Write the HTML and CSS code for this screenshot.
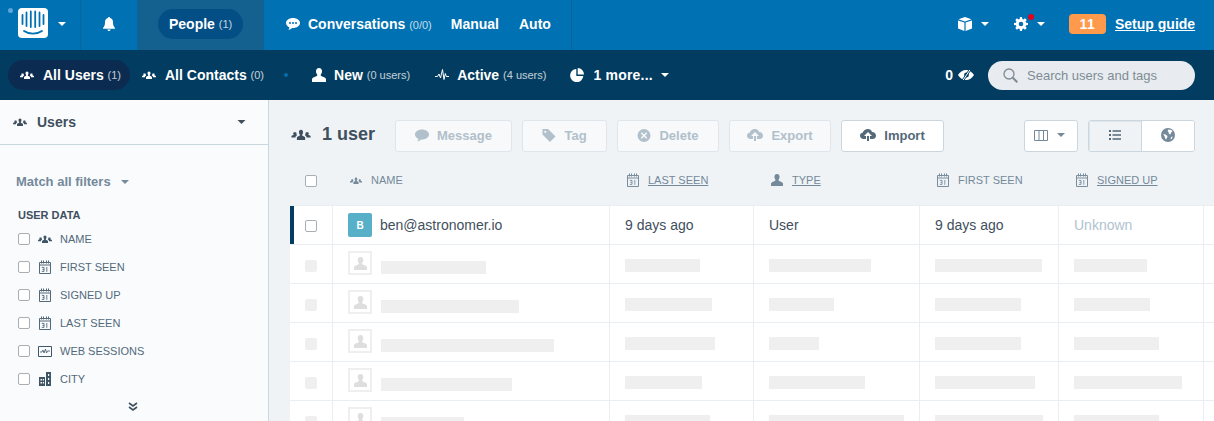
FILE: index.html
```html
<!DOCTYPE html>
<html lang="en">
<head>
<meta charset="utf-8">
<title>People</title>
<link rel="stylesheet" href="styles.css">
</head>
<body>
<svg class="defs" width="0" height="0" aria-hidden="true">
  <symbol id="i-users" viewBox="0 0 14 8"><path d="M7 .5c1 0 1.500.8 1.500 1.800 0 .8-.3 1.400-.7 1.800 0 .6.300.8 1.100 1.100.8.300 1.100.6 1.100 1.200V8H4V6.400c0-.6.300-.9 1.100-1.200.8-.3 1.100-.5 1.100-1.100-.4-.4-.7-1-.7-1.800C5.500 1.300 6 .5 7 .5zM2.700 2.400c.4 0 .7.100 1 .3-.1.900.1 1.400.5 1.800-.5.300-1.200.6-1.300 1.700H0v-.7c0-.4.300-.7.900-.9.500-.2.800-.3.800-.6-.3-.3-.4-.7-.4-1 0-.4.500-.6 1.400-.6zm8.600 0c.9 0 1.400.2 1.400.6 0 .3-.1.700-.4 1 0 .3.300.4.800.6.600.2.900.5.900.9v.7h-2.900c-.1-1.100-.8-1.400-1.300-1.700.4-.4.600-.9.500-1.800.3-.2.600-.3 1-.3z"/></symbol>
  <symbol id="i-user" viewBox="0 0 14 14"><path d="M7 0c2 0 3 1.400 3 3.300 0 1.500-.6 2.700-1.300 3.400 0 1 .5 1.400 2.200 2 1.700.6 3.100 1.300 3.100 2.600V14H0v-2.700c0-1.300 1.400-2 3.100-2.600 1.700-.6 2.200-1 2.200-2C4.600 6 4 4.800 4 3.300 4 1.400 5 0 7 0z"/></symbol>
  <symbol id="i-cal" viewBox="0 0 12 14"><path fill="none" stroke="currentColor" d="M.5 2.500h11v11H.5zM.5 5h11"/><path fill="currentColor" d="M2 .5h1v3H2zM4 .5h1v3H4zM7 .5h1v3H7zM9 .5h1v3H9z"/><path fill="none" stroke="currentColor" stroke-width=".9" d="M2.800 7.400h2.200v4H2.800M3.500 9.400h1.500M7.800 7v4.800"/></symbol>
  <symbol id="i-caret" viewBox="0 0 8 4"><path d="M0 0h8L4 4z"/></symbol>
</svg>

<header class="topbar">
  <div class="cell cell-logo">
    <span class="status-dot"></span>
    <svg class="logo" viewBox="0 0 30 30"><rect width="30" height="30" rx="4" fill="#fff"/><path d="M4.500 7v9M8.500 4.500v13.500M12.800 3.500v15.500M17.200 3.500v15.500M21.500 4.500v13.500M25.500 7v9" stroke="#0071b2" stroke-width="1.800" stroke-linecap="round"/><path d="M6 23c5 3.500 13 3.500 18 0" fill="none" stroke="#0071b2" stroke-width="1.800" stroke-linecap="round"/></svg>
    <svg class="caret caret-w"><use href="#i-caret"/></svg>
  </div>
  <div class="cell cell-bell">
    <svg class="ic-bell" viewBox="0 0 12 14"><path fill="#fff" d="M6 0c.6 0 1 .4 1 1 2 .5 3 2 3 4 0 3 .5 4.500 2 6v.8H0V11c1.500-1.500 2-3 2-6 0-2 1-3.500 3-4 0-.6.400-1 1-1zM4.300 12.500h3.400C7.600 13.400 6.900 14 6 14s-1.600-.6-1.700-1.500z"/></svg>
  </div>
  <div class="cell cell-people">
    <a class="pill pill-people">People <small>(1)</small></a>
  </div>
  <nav class="cell cell-conv">
    <svg class="ic-chat" viewBox="0 0 14 12"><path fill="#fff" d="M7 0c3.900 0 7 2.200 7 5s-3.100 5-7 5h-.9C5 11 3.700 11.800 2.300 12c.6-.7 1-1.500 1.100-2.600C1.400 8.500 0 6.900 0 5c0-2.800 3.100-5 7-5z"/><circle cx="4" cy="5" r="1" fill="#0071b2"/><circle cx="7" cy="5" r="1" fill="#0071b2"/><circle cx="10" cy="5" r="1" fill="#0071b2"/></svg>
    <a class="tnav tnav-conv">Conversations <small>(0/0)</small></a>
    <a class="tnav tnav-manual">Manual</a>
    <a class="tnav">Auto</a>
  </nav>
  <div class="top-right">
    <svg class="ic-cube" viewBox="0 0 14 14"><path fill="#fff" d="M7 0l6.500 2.300L7 4.500.5 2.300zM0 3.400l6.400 2.200V14L0 11.500zM14 3.400v8.100L7.600 14V5.600z"/></svg>
    <svg class="caret caret-w caret-cube"><use href="#i-caret"/></svg>
    <span class="gear-wrap">
      <svg class="ic-gear" viewBox="0 0 14 14"><path fill="#fff" fill-rule="evenodd" d="M6 0h2l.3 1.900 1.200.5L11 1.300l1.700 1.700-1.100 1.500.5 1.200 1.900.3v2l-1.900.3-.5 1.200 1.100 1.500-1.700 1.700-1.500-1.100-1.200.5L8 14H6l-.3-1.900-1.200-.5L3 12.700 1.300 11l1.100-1.500-.5-1.200L0 8V6l1.900-.3.500-1.200L1.300 3 3 1.300l1.500 1.100 1.200-.5zM7 4.700a2.300 2.300 0 100 4.600 2.300 2.300 0 000-4.600z"/></svg>
      <span class="red-dot"></span>
    </span>
    <svg class="caret caret-w caret-gear"><use href="#i-caret"/></svg>
    <span class="badge">11</span>
    <a class="setup">Setup guide</a>
  </div>
</header>

<div class="subbar">
  <a class="pill pill-sub"><svg class="ic-users-w"><use href="#i-users"/></svg>All Users <small>(1)</small></a>
  <a class="snav snav-contacts"><svg class="ic-users-w"><use href="#i-users"/></svg>All Contacts <small>(0)</small></a>
  <span class="sub-dot"></span>
  <a class="snav snav-new"><svg class="ic-user-w"><use href="#i-user"/></svg>New <small>(0 users)</small></a>
  <a class="snav snav-active"><svg class="ic-pulse" viewBox="0 0 14 12"><path fill="none" stroke="#fff" d="M0 7.500h2.500L4 5l1.500 4L7.500.5l1.500 10 1.300-6 1 3H14"/></svg>Active <small>(4 users)</small></a>
  <a class="snav snav-more"><svg class="ic-pie" viewBox="0 0 14 14"><path fill="#fff" d="M6.300 1v7h7A6.600 6.600 0 116.300 1zM7.700 0A6.400 6.400 0 0114 6.600H7.700z"/></svg><span class="more-label">1 more...</span><svg class="caret caret-w caret-more"><use href="#i-caret"/></svg></a>
  <div class="sub-right">
    <span class="hidden-count">0</span>
    <svg class="ic-eye" viewBox="0 0 16 10"><path fill="#fff" d="M8 0c3.300 0 6.200 2 8 5-1.800 3-4.700 5-8 5S1.800 8 0 5c1.800-3 4.700-5 8-5z"/><circle cx="8.500" cy="5" r="2.400" fill="#023c60"/><path stroke="#023c60" stroke-width="2.400" d="M12.500-1L4.500 11"/><path stroke="#fff" stroke-width="1" d="M12.500-1L4.500 11"/></svg>
    <label class="search">
      <svg class="ic-search" viewBox="0 0 15 15"><circle cx="6" cy="6" r="5" fill="none" stroke="#7f8b94" stroke-width="1.300"/><path stroke="#7f8b94" stroke-width="2" d="M9.800 9.800l4.500 4.500"/></svg>
      <span>Search users and tags</span>
    </label>
  </div>
</div>

<div class="body-row">
  <aside class="sidebar">
    <div class="side-head">
      <svg class="ic-users-d"><use href="#i-users"/></svg>
      <span class="side-title">Users</span>
      <svg class="caret caret-d"><use href="#i-caret"/></svg>
    </div>
    <div class="match">Match all filters<svg class="caret caret-m"><use href="#i-caret"/></svg></div>
    <div class="side-label">USER DATA</div>
    <ul class="attrs">
      <li><span class="cb"></span><span class="attr-ic"><svg class="ic-users-s"><use href="#i-users"/></svg></span>NAME</li>
      <li><span class="cb"></span><span class="attr-ic"><svg class="ic-cal"><use href="#i-cal"/></svg></span>FIRST SEEN</li>
      <li><span class="cb"></span><span class="attr-ic"><svg class="ic-cal"><use href="#i-cal"/></svg></span>SIGNED UP</li>
      <li><span class="cb"></span><span class="attr-ic"><svg class="ic-cal"><use href="#i-cal"/></svg></span>LAST SEEN</li>
      <li><span class="cb"></span><span class="attr-ic"><svg class="ic-web" viewBox="0 0 14 11"><path fill="none" stroke="currentColor" d="M.5.500h13v10H.5z"/><path fill="none" stroke="currentColor" stroke-width=".8" d="M2 6h2l1-2 1 3 1.500-4 1 4 1-2H12"/></svg></span>WEB SESSIONS</li>
      <li><span class="cb"></span><span class="attr-ic"><svg class="ic-city" viewBox="0 0 12 14"><path fill="currentColor" fill-rule="evenodd" d="M0 5h6v9H0zM7 0h5v14H7zM1.500 7v1.500H3V7zM3.800 7v1.500h1.200V7zM1.500 10v1.500H3V10zM3.800 10v1.500h1.200V10zM9 2v2h1.200V2zM9 6v2h1.200V6zM9 10v2h1.200v-2z"/></svg></span>CITY</li>
    </ul>
    <div class="more-attrs"><svg class="ic-chev" viewBox="0 0 10 9"><path fill="none" stroke="#3f4f5d" stroke-width="1.600" d="M1 1l4 3 4-3M1 5l4 3 4-3"/></svg></div>
  </aside>

  <main class="main">
    <div class="toolbar">
      <svg class="ic-users-l"><use href="#i-users"/></svg>
      <span class="count">1 user</span>
      <button class="btn btn-off btn-msg"><svg class="btn-ic" viewBox="0 0 14 12"><path d="M7 0c3.900 0 7 2.200 7 5s-3.100 5-7 5h-.9C5 11 3.700 11.800 2.300 12c.6-.7 1-1.500 1.100-2.600C1.400 8.500 0 6.900 0 5c0-2.800 3.100-5 7-5z"/></svg>Message</button>
      <button class="btn btn-off btn-tag"><svg class="btn-ic" viewBox="0 0 14 14"><path fill-rule="evenodd" d="M0 0h6l8 8-6 6-8-8zM3 1.800a1.200 1.200 0 100 2.400 1.200 1.200 0 000-2.400z"/></svg>Tag</button>
      <button class="btn btn-off btn-del"><svg class="btn-ic" viewBox="0 0 14 14"><path fill-rule="evenodd" d="M7 0a7 7 0 110 14A7 7 0 017 0zM4.700 3.500L3.500 4.700 5.800 7 3.500 9.300l1.200 1.200L7 8.200l2.300 2.300 1.200-1.200L8.200 7l2.300-2.300-1.200-1.200L7 5.800z"/></svg>Delete</button>
      <button class="btn btn-off btn-exp"><svg class="btn-ic ic-cloud" viewBox="0 0 16 12"><path d="M8 0c2 0 3.500 1.200 4 3 2.300 0 4 1.500 4 3.700 0 2-1.500 3.300-3.500 3.300H10V7h2L8 3 4 7h2v3H3.500C1.500 10 0 8.700 0 6.800 0 5 1.200 3.800 2.800 3.500 3.500 1.400 5.500 0 8 0zM7 7h2v5H7z"/></svg>Export</button>
      <button class="btn btn-imp"><svg class="btn-ic ic-cloud" viewBox="0 0 16 12"><path d="M8 0c2 0 3.500 1.200 4 3 2.300 0 4 1.500 4 3.700 0 2-1.500 3.300-3.500 3.300H10V7h2L8 3 4 7h2v3H3.500C1.500 10 0 8.700 0 6.800 0 5 1.200 3.800 2.800 3.500 3.500 1.400 5.500 0 8 0zM7 7h2v5H7z"/></svg>Import</button>
      <div class="tool-right">
        <button class="btn btn-cols"><svg class="ic-cols" viewBox="0 0 14 11"><path fill="none" stroke="#74899a" d="M.5.500h13v10H.5zM5 .5v10M9.500.5v10"/></svg><svg class="caret caret-col"><use href="#i-caret"/></svg></button>
        <div class="seg">
          <button class="seg-btn seg-on"><svg class="ic-list" viewBox="0 0 12 10"><path fill="#53697a" d="M0 0h2v2H0zM3.500 .2H12v1.600H3.500zM0 4h2v2H0zM3.500 4.200H12v1.600H3.500zM0 8h2v2H0zM3.500 8.200H12v1.600H3.500z"/></svg></button>
          <button class="seg-btn"><svg class="ic-globe" viewBox="0 0 14 14"><circle cx="7" cy="7" r="7" fill="#74899a"/><path fill="#fff" d="M7.500 1.500l3 .5 1 1.500-1.500 1-.5 2-1.500-.5-.5-2-1-1zM2 6l2.500.5 2 1.500-.5 2-1 1.500-1-1.500-.5-2zM10 9l1.500-.5-.5 2-1.500 1z"/></svg></button>
        </div>
      </div>
    </div>

    <div class="thead grid">
      <div class="th th-check"><span class="cb cb-head"></span></div>
      <div class="th th-first"><svg class="ic-users-h"><use href="#i-users"/></svg>NAME</div>
      <div class="th"><svg class="ic-cal"><use href="#i-cal"/></svg><u>LAST SEEN</u></div>
      <div class="th"><svg class="ic-user-h"><use href="#i-user"/></svg><u>TYPE</u></div>
      <div class="th"><svg class="ic-cal"><use href="#i-cal"/></svg>FIRST SEEN</div>
      <div class="th"><svg class="ic-cal"><use href="#i-cal"/></svg><u>SIGNED UP</u></div>
    </div>

    <div class="tr grid tr-live">
      <div class="td td-check"><span class="cb cb-row"></span></div>
      <div class="td td-name"><span class="avatar">B</span>ben@astronomer.io</div>
      <div class="td">9 days ago</div>
      <div class="td">User</div>
      <div class="td">9 days ago</div>
      <div class="td td-muted">Unknown</div>
      <div class="td"></div>
    </div>

    <div class="tr grid">
      <div class="td td-check"><span class="cb-ghost"></span></div>
      <div class="td td-name"><span class="ghost-av"><svg class="ic-ghost"><use href="#i-user"/></svg></span><span class="bar bar-name" style="width:105px"></span></div>
      <div class="td"><span class="bar" style="width:75px"></span></div>
      <div class="td"><span class="bar" style="width:102px"></span></div>
      <div class="td"><span class="bar" style="width:107px"></span></div>
      <div class="td"><span class="bar" style="width:73px"></span></div>
      <div class="td"></div>
    </div>
    <div class="tr grid">
      <div class="td td-check"><span class="cb-ghost"></span></div>
      <div class="td td-name"><span class="ghost-av"><svg class="ic-ghost"><use href="#i-user"/></svg></span><span class="bar bar-name" style="width:138px"></span></div>
      <div class="td"><span class="bar" style="width:87px"></span></div>
      <div class="td"><span class="bar" style="width:65px"></span></div>
      <div class="td"><span class="bar" style="width:86px"></span></div>
      <div class="td"><span class="bar" style="width:76px"></span></div>
      <div class="td"></div>
    </div>
    <div class="tr grid">
      <div class="td td-check"><span class="cb-ghost"></span></div>
      <div class="td td-name"><span class="ghost-av"><svg class="ic-ghost"><use href="#i-user"/></svg></span><span class="bar bar-name" style="width:173px"></span></div>
      <div class="td"><span class="bar" style="width:90px"></span></div>
      <div class="td"><span class="bar" style="width:50px"></span></div>
      <div class="td"><span class="bar" style="width:86px"></span></div>
      <div class="td"><span class="bar" style="width:85px"></span></div>
      <div class="td"></div>
    </div>
    <div class="tr grid">
      <div class="td td-check"><span class="cb-ghost"></span></div>
      <div class="td td-name"><span class="ghost-av"><svg class="ic-ghost"><use href="#i-user"/></svg></span><span class="bar bar-name" style="width:131px"></span></div>
      <div class="td"><span class="bar" style="width:77px"></span></div>
      <div class="td"><span class="bar" style="width:96px"></span></div>
      <div class="td"><span class="bar" style="width:100px"></span></div>
      <div class="td"><span class="bar" style="width:108px"></span></div>
      <div class="td"></div>
    </div>
    <div class="tr grid">
      <div class="td td-check"><span class="cb-ghost"></span></div>
      <div class="td td-name"><span class="ghost-av"><svg class="ic-ghost"><use href="#i-user"/></svg></span><span class="bar bar-name" style="width:83px"></span></div>
      <div class="td"><span class="bar" style="width:85px"></span></div>
      <div class="td"><span class="bar" style="width:135px"></span></div>
      <div class="td"><span class="bar" style="width:108px"></span></div>
      <div class="td"><span class="bar" style="width:85px"></span></div>
      <div class="td"></div>
    </div>
  </main>
</div>
</body>
</html>
```

FILE: styles.css
```css
* { box-sizing: border-box; }
html, body { margin: 0; padding: 0; }
body {
  width: 1214px;
  height: 421px;
  overflow: hidden;
  font-family: "Liberation Sans", Arial, sans-serif;
  background: #eff3f6;
  color: #3f4f5d;
}
.defs { position: absolute; }
small { font-size: 11px; font-weight: 400; opacity: .75; }
ul { list-style: none; margin: 0; padding: 0; }
button { font-family: inherit; padding: 0; }

.caret { width: 8px; height: 4px; display: block; flex: none; }
.caret-w { fill: #fff; }

/* top bar */
.topbar {
  height: 50px;
  background: #0071b2;
  display: flex;
  align-items: stretch;
  color: #fff;
}
.cell { display: flex; align-items: center; border-right: 1px solid #0a639b; padding-bottom: 2px; }
.cell-logo { width: 81px; padding-left: 18px; position: relative; }
.status-dot {
  position: absolute;
  left: 8px;
  top: 8px;
  width: 5px;
  height: 5px;
  border-radius: 50%;
  background: #5ba6dc;
}
.logo { width: 30px; height: 30px; display: block; margin: -2px 10px 0 0; flex: none; }
.cell-bell { width: 57px; justify-content: center; }
.ic-bell { width: 12px; height: 14px; display: block; }
.cell-people { width: 126px; background: #14608f; padding-left: 20px; }
.pill {
  display: flex;
  align-items: center;
  font-weight: 700;
  font-size: 14px;
  color: #fff;
  white-space: pre;
}
.pill-people {
  width: 85px;
  height: 30px;
  border-radius: 15px;
  background: #034e85;
  padding-left: 11px;
}
.cell-conv { width: 308px; padding-left: 22px; }
.ic-chat { width: 14px; height: 12px; display: block; margin-right: 8px; flex: none; }
.tnav { font-weight: 700; font-size: 14px; white-space: pre; margin-right: 20px; }
.tnav-conv { margin-right: 19px; }
.tnav-manual { margin-right: 20px; }
.top-right { flex: 1; display: flex; align-items: center; padding: 0 0 2px 386px; }
.ic-cube { width: 14px; height: 14px; display: block; }
.caret-cube { margin-left: 9px; }
.gear-wrap { position: relative; display: block; margin-left: 25px; width: 14px; height: 14px; }
.ic-gear { width: 14px; height: 14px; display: block; }
.red-dot {
  position: absolute;
  left: 14px;
  top: -3px;
  width: 6px;
  height: 6px;
  border-radius: 50%;
  background: #e5001c;
}
.caret-gear { margin-left: 9px; }
.badge {
  width: 37px;
  height: 20px;
  margin-left: 24px;
  border-radius: 4px;
  background: #ff9a4d;
  font-weight: 700;
  font-size: 14px;
  line-height: 20px;
  text-align: center;
  letter-spacing: .5px;
}
.setup { margin-left: 9px; font-weight: 700; font-size: 14px; text-decoration: underline; white-space: nowrap; }

/* sub bar */
.subbar {
  height: 50px;
  background: #023c60;
  display: flex;
  align-items: center;
  color: #fff;
  padding-left: 8px;
}
.pill-sub {
  width: 122px;
  height: 30px;
  border-radius: 15px;
  background: #0c2b50;
  padding-left: 12px;
}
.ic-users-w { width: 14px; height: 8px; fill: #fff; display: block; margin-right: 9px; flex: none; }
.snav { display: flex; align-items: center; font-weight: 700; font-size: 14px; white-space: pre; }
.snav-contacts { margin-left: 12px; }
.sub-dot { width: 4px; height: 4px; border-radius: 50%; background: #0a6cab; margin-left: 20px; }
.snav-new { margin-left: 24px; }
.ic-user-w { width: 14px; height: 14px; fill: #fff; display: block; margin-right: 8px; }
.snav-active { margin-left: 25px; }
.ic-pulse { width: 14px; height: 12px; display: block; margin-right: 8px; }
.snav-more { margin-left: 24px; }
.ic-pie { width: 14px; height: 14px; display: block; margin-right: 9px; }
.more-label { letter-spacing: .2px; }
.caret-more { margin-left: 8px; }
.sub-right { margin-left: auto; display: flex; align-items: center; padding-right: 19px; }
.hidden-count { font-weight: 700; font-size: 14px; }
.ic-eye { width: 16px; height: 10px; display: block; margin: 0 14px 0 5px; }
.search {
  width: 207px;
  height: 29px;
  border-radius: 14.500px;
  background: #e8ecf0;
  display: flex;
  align-items: center;
  padding-left: 15px;
  color: #7f8b94;
  font-size: 13px;
}
.ic-search { width: 15px; height: 15px; display: block; margin-right: 9px; }

/* layout */
.body-row { display: flex; height: 321px; overflow: hidden; }
.sidebar {
  width: 269px;
  flex: none;
  background: #f9fbfd;
  border-right: 1px solid #c9d7df;
}
.side-head {
  height: 45px;
  border-bottom: 1px solid #c9d7df;
  display: flex;
  align-items: center;
  padding: 0 22px 0 13px;
}
.ic-users-d { width: 14px; height: 8px; fill: #3f4f5d; display: block; margin-right: 10px; }
.side-title { font-weight: 700; font-size: 14px; color: #3f4f5d; }
.caret-d { margin-left: auto; fill: #3f4f5d; width: 9px; height: 4px; }
.match {
  display: flex;
  align-items: center;
  margin: 29px 0 0 16px;
  height: 15px;
  font-size: 13px;
  font-weight: 700;
  color: #74899a;
}
.caret-m { margin-left: 10px; fill: #74899a; }
.side-label { margin: 20px 0 0 18px; height: 13px; line-height: 13px; font-size: 11px; font-weight: 700; color: #3f4f5d; }
.attrs { margin: 3px 0 0 18px; }
.attrs li {
  display: flex;
  align-items: center;
  height: 28px;
  font-size: 11px;
  color: #53697a;
}
.cb {
  display: block;
  width: 12px;
  height: 12px;
  border: 1px solid #a8aeb3;
  border-radius: 2px;
  background: #fff;
  flex: none;
}
.attr-ic { width: 22px; margin-left: 8px; display: flex; align-items: center; color: #3f5666; flex: none; }
.ic-users-s { width: 14px; height: 8px; fill: #3f5666; display: block; }
.attrs .ic-cal { margin-left: 1px; color: #53697a; }
.ic-cal { width: 12px; height: 14px; display: block; color: #7a8d9c; flex: none; }
.ic-web { width: 14px; height: 11px; display: block; }
.ic-city { width: 12px; height: 14px; display: block; margin-left: 1px; }
.more-attrs { display: flex; justify-content: center; margin-top: 9px; }
.ic-chev { width: 10px; height: 9px; display: block; margin-left: -3px; }

/* main */
.main { flex: 1; min-width: 0; padding-left: 21px; }
.toolbar { height: 60px; padding: 20px 19px 8px 1px; display: flex; align-items: stretch; }
.ic-users-l { width: 20px; height: 11px; fill: #3f4f5d; align-self: center; margin-top: -4px; display: block; }
.count { margin-left: 11px; width: 73px; font-size: 18px; font-weight: 700; color: #3f4f5d; line-height: 28px; }
.btn {
  height: 32px;
  display: flex;
  align-items: center;
  justify-content: center;
  background: #fff;
  border: 1px solid #cbd6de;
  border-radius: 3px;
  font-size: 13px;
  font-weight: 700;
  color: #53697a;
  margin-right: 10px;
  padding-bottom: 2px;
}
.btn-off { background: #f7f9fb; border-color: #dfe6eb; color: #b1c0ca; }
.btn-ic { width: 14px; height: 13px; margin-right: 8px; display: block; fill: currentColor; }
.ic-cloud { width: 16px; height: 12px; }
.btn-msg { width: 117px; }
.btn-tag { width: 85px; }
.btn-del { width: 102px; }
.btn-exp { width: 102px; }
.btn-imp { width: 103px; margin-right: 0; }
.tool-right { margin-left: auto; display: flex; }
.btn-cols { width: 54px; gap: 9px; padding-right: 4px; }
.ic-cols { width: 14px; height: 11px; display: block; }
.caret-col { fill: #74899a; }
.seg { display: flex; width: 107px; height: 32px; border: 1px solid #cbd6de; border-radius: 3px; background: #fff; overflow: hidden; }
.seg-btn { flex: 1; border: 0; background: #fff; display: flex; align-items: center; justify-content: center; padding-bottom: 2px; }
.seg-on { background: #eff3f6; border-right: 1px solid #cbd6de; box-shadow: inset 1px 1px 0 #dfe6eb; }
.ic-list { width: 12px; height: 10px; display: block; }
.ic-globe { width: 14px; height: 14px; display: block; }

/* table */
.grid { display: grid; grid-template-columns: 43px 277px 144px 166px 139px 145px 1fr; }
.thead { height: 45px; }
.th {
  display: flex;
  align-items: center;
  padding-left: 17px;
  gap: 9px;
  font-size: 11px;
  color: #74899a;
  padding-bottom: 5px;
}
.th u { text-decoration: underline; }
.th-check { padding-left: 15px; }
.cb-head { margin-top: 2px; }
.ic-users-h { width: 12px; height: 7px; fill: #74899a; display: block; }
.ic-user-h { width: 12px; height: 12px; fill: #74899a; display: block; }
.tr { height: 39px; background: #fff; border-bottom: 1px solid #e9eef2; }
.td {
  display: flex;
  align-items: center;
  padding-left: 15px;
  border-right: 1px solid #e9eef2;
  font-size: 14px;
  color: #3f4f5d;
}
.td:last-child { border-right: 0; }
.tr-live { box-shadow: inset 4px 0 0 #023c60; border-top: 1px solid #e9eef2; height: 40px; }
.cb-row { margin-top: 2px; }
.td-muted { color: #b1c3cf; }
.avatar {
  width: 24px;
  height: 24px;
  border-radius: 2px;
  background: #57afc8;
  color: #fff;
  font-size: 10px;
  font-weight: 700;
  display: flex;
  align-items: center;
  justify-content: center;
  margin-right: 8px;
}
.cb-ghost { display: block; width: 12px; height: 12px; border-radius: 2px; background: #efefef; margin-top: 4px; }
.ghost-av {
  width: 24px;
  height: 24px;
  border: 2px solid #efefef;
  display: flex;
  align-items: center;
  justify-content: center;
  margin-right: 9px;
  flex: none;
  align-self: flex-start;
  margin-top: 6px;
}
.ic-ghost { width: 13px; height: 13px; fill: #dedede; display: block; }
.bar { display: block; height: 13px; background: #efefef; margin-top: 3px; }
.bar-name { margin-top: 7px; }
```
